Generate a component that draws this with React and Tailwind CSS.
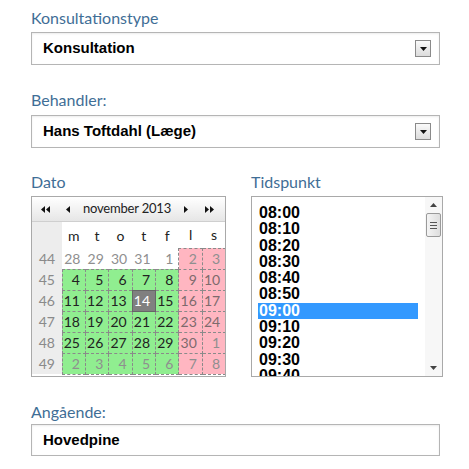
import React from "react";

const labelCls = "text-[16px] leading-[20px] text-[#3f6e96] font-['Lato',sans-serif]";

const Caret = () => (
  <div className="w-[16px] h-[17px] border border-[#8a8a8a] bg-gradient-to-b from-[#fafafa] to-[#dcdcdc] flex items-center justify-center">
    <svg width="7" height="4" viewBox="0 0 7 4"><path d="M0 0h7L3.5 4z" fill="#111" /></svg>
  </div>
);

const Select = ({ value }) => (
  <div className="h-[33px] w-[409px] border border-[#b5b5b5] bg-white flex items-center justify-between pl-[11px] pr-[8px] shadow-[inset_0_1px_2px_rgba(0,0,0,0.08)]">
    <span className="text-[15px] font-bold text-black font-['Liberation_Sans',Arial,sans-serif]">{value}</span>
    <Caret />
  </div>
);

const Tri = ({ dir }) => (
  <svg width="4" height="7" viewBox="0 0 4 7">
    {dir === "l" ? <path d="M4 0v7L0 3.5z" fill="#111" /> : <path d="M0 0v7l4-3.5z" fill="#111" />}
  </svg>
);

// type: w = white (no border), g = green, p = pink, s = selected; o = gray text
const weeks = [
  [44, [[28, "w", 1], [29, "w", 1], [30, "w", 1], [31, "w", 1], [1, "w", 1], [2, "p", 1], [3, "p", 1]]],
  [45, [[4, "g", 0], [5, "g", 0], [6, "g", 0], [7, "g", 0], [8, "g", 0], [9, "p", 0], [10, "p", 0]]],
  [46, [[11, "g", 0], [12, "g", 0], [13, "g", 0], [14, "s", 0], [15, "g", 0], [16, "p", 0], [17, "p", 0]]],
  [47, [[18, "g", 0], [19, "g", 0], [20, "g", 0], [21, "g", 0], [22, "g", 0], [23, "p", 0], [24, "p", 0]]],
  [48, [[25, "g", 0], [26, "g", 0], [27, "g", 0], [28, "g", 0], [29, "g", 0], [30, "p", 0], [1, "p", 1]]],
  [49, [[2, "g", 1], [3, "g", 1], [4, "g", 1], [5, "g", 1], [6, "g", 1], [7, "p", 1], [8, "p", 1]]],
];

const cellCls = (t, o) => {
  let c = "h-[21px] p-0 pr-[5px] text-right ";
  if (t === "g") c += "bg-[#90ee90] border border-dashed border-[#8a8a8a] ";
  if (t === "p") c += "bg-[#ffb6c1] border border-dashed border-[#8a8a8a] ";
  if (t === "s") c += "bg-[#808080] border border-solid border-[#666] text-white ";
  if (t === "w") c += "bg-white ";
  if (t !== "s") c += o ? "text-[#8f8f8f] " : t === "p" ? "text-[#7d6a6c] " : "text-[#222] ";
  return c;
};

const Calendar = () => (
  <div className="w-[195px] h-[181px] border border-[#a9a9a9] bg-white overflow-hidden font-['Lato',sans-serif]">
    <div className="h-[25px] flex items-center bg-gradient-to-b from-white to-[#e6e6e6] border-b border-[#cfcfcf] text-[13px] text-[#222]">
      <div className="flex gap-[1px] ml-[9px]"><Tri dir="l" /><Tri dir="l" /></div>
      <div className="ml-[16px]"><Tri dir="l" /></div>
      <div className="flex-1 text-center tracking-[-0.2px]">november 2013</div>
      <div className="mr-[17px]"><Tri dir="r" /></div>
      <div className="flex gap-[1px] mr-[11px]"><Tri dir="r" /><Tri dir="r" /></div>
    </div>
    <table className="table-fixed border-collapse w-[194px] text-[14px] leading-[17px]">
      <colgroup>
        <col className="w-[30px]" />
        {[0, 1, 2, 3, 4, 5, 6].map((i) => <col key={i} className="w-[23.4px]" />)}
      </colgroup>
      <tbody>
        <tr className="h-[26px]">
          <td className="bg-[#ededed]"></td>
          {["m", "t", "o", "t", "f", "l", "s"].map((d, i) => (
            <td key={i} className="text-center text-[#222] text-[14px]">{d}</td>
          ))}
        </tr>
        {weeks.map(([w, days]) => (
          <tr key={w}>
            <td className="bg-[#ededed] text-center text-[#8a8a8a] h-[21px] p-0">{w}</td>
            {days.map(([d, t, o], i) => (
              <td key={i} className={cellCls(t, o)}>{d}</td>
            ))}
          </tr>
        ))}
      </tbody>
    </table>
  </div>
);

const times = ["08:00", "08:10", "08:20", "08:30", "08:40", "08:50", "09:00", "09:10", "09:20", "09:30", "09:40"];

const TimeList = () => (
  <div className="w-[192px] h-[181px] border border-[#a9a9a9] bg-white flex overflow-hidden">
    <div className="flex-1 pt-[8px] pl-[6px] overflow-hidden">
      {times.map((t) => (
        <div
          key={t}
          className={`w-[160px] h-[16.3px] leading-[16.3px] pl-[1px] text-[16px] font-bold font-['Liberation_Sans',Arial,sans-serif] ${
            t === "09:00" ? "bg-[#3399ff] text-white" : "text-black"
          }`}
        >
          {t}
        </div>
      ))}
    </div>
    <div className="w-[17px] bg-[#f7f7f7] flex flex-col items-center">
      <div className="h-[16px] flex items-center justify-center">
        <svg width="7" height="4" viewBox="0 0 7 4"><path d="M0 4h7L3.5 0z" fill="#444" /></svg>
      </div>
      <div className="w-[15px] h-[24px] border border-[#9a9a9a] rounded-[2px] bg-gradient-to-r from-[#f4f4f4] to-[#dedede] flex flex-col items-center justify-center gap-[2px]">
        <div className="w-[7px] h-[1px] bg-[#555]" />
        <div className="w-[7px] h-[1px] bg-[#555]" />
        <div className="w-[7px] h-[1px] bg-[#555]" />
      </div>
      <div className="flex-1" />
      <div className="h-[16px] flex items-center justify-center">
        <svg width="7" height="4" viewBox="0 0 7 4"><path d="M0 0h7L3.5 4z" fill="#444" /></svg>
      </div>
    </div>
  </div>
);

export default function App() {
  return (
    <div className="w-[469px] h-[469px] bg-white pl-[31px] pt-[8px]">
      <div className={labelCls}>Konsultationstype</div>
      <div className="mt-[4px]"><Select value="Konsultation" /></div>
      <div className={`${labelCls} mt-[25px]`}>Behandler:</div>
      <div className="mt-[5px]"><Select value="Hans Toftdahl (Læge)" /></div>
      <div className="flex gap-[25px] mt-[24px]">
        <div>
          <div className={labelCls}>Dato</div>
          <div className="mt-[4px]"><Calendar /></div>
        </div>
        <div>
          <div className={labelCls}>Tidspunkt</div>
          <div className="mt-[4px]"><TimeList /></div>
        </div>
      </div>
      <div className={`${labelCls} mt-[25px]`}>Angående:</div>
      <div className="mt-[2px] h-[32px] w-[409px] border border-[#b5b5b5] bg-white flex items-center pl-[11px] shadow-[inset_0_1px_2px_rgba(0,0,0,0.08)]">
        <span className="text-[15px] font-bold text-black font-['Liberation_Sans',Arial,sans-serif]">Hovedpine</span>
      </div>
    </div>
  );
}
